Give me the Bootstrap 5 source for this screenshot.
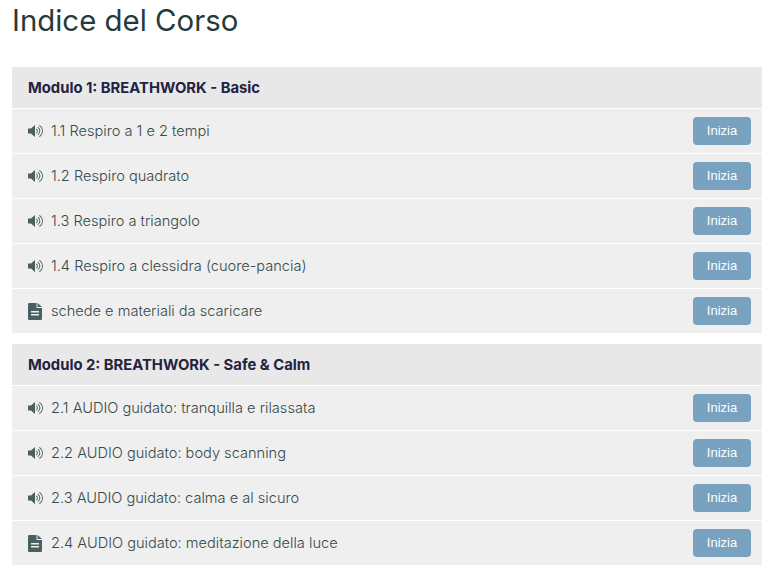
<!DOCTYPE html>
<html lang="it">
<head>
<meta charset="utf-8">
<title>Indice del Corso</title>
<link href="https://cdn.jsdelivr.net/npm/bootstrap@5.3.0/dist/css/bootstrap.min.css" rel="stylesheet">
<style>
html, body { height: 572px; overflow: hidden; }
body { font-family: Inter, Lato, sans-serif; background: #fff; padding: 0 16px 0 12px; }
.course-title { font-size: 29.4px; line-height: 42px; font-weight: 400; color: #263a3c; margin: 0 0 25px; }
.module-box { margin-bottom: 11px; }
.module-head { height: 41px; background: #e8e8e8; padding: 1px 0 0 16px; font-size: 14.8px; line-height: 22px; font-weight: 700; color: #232240; }
.lesson-row { height: 45px; background: #efefef; border-top: 1px solid #fff; padding: 0 11px 0 16px; font-size: 14.6px; line-height: 22px; font-weight: 300; color: #364a4b; }
.lesson-row svg { flex: none; fill: #4a5f5f; }
.icon-slot { width: 23px; flex: none; }
.start-btn { width: 58px; height: 28px; padding: 0 0 1px; font-family: "Liberation Sans", sans-serif; font-size: 13px; line-height: 27px; color: #fff; background: #78a2c0; border: 0; border-radius: 4px; }
</style>
</head>
<body>
<svg width="0" height="0" class="d-none">
  <symbol id="ic-audio" viewBox="0 0 16 14"><path d="M0 4.500h3L7 1v12L3 9.500H0z"/><path d="M8.500 4.500a3 3 0 0 1 0 5l-.5-.8a2 2 0 0 0 0-3.400zM10 2.800a5 5 0 0 1 0 8.400l-.5-.8a4 4 0 0 0 0-6.800zM11.500 1a7 7 0 0 1 0 12l-.5-.8a6 6 0 0 0 0-10.400z"/></symbol>
  <symbol id="ic-file" viewBox="0 0 15 17"><path fill-rule="evenodd" d="M1 0h7.500v5H14v11a1 1 0 0 1-1 1H1a1 1 0 0 1-1-1V1a1 1 0 0 1 1-1zM3 8v1.500h8V8zm0 3v1.500h8V11zM9.500 0 14 4H9.500z"/></symbol>
</svg>
<h1 class="course-title">Indice del Corso</h1>

<section class="module-box">
  <div class="module-head d-flex align-items-center">Modulo 1: BREATHWORK - Basic</div>
  <div class="lesson-row d-flex align-items-center justify-content-between">
    <span class="d-flex align-items-center"><span class="icon-slot d-flex"><svg width="16" height="14"><use href="#ic-audio"/></svg></span><span>1.1 Respiro a 1 e 2 tempi</span></span>
    <button type="button" class="btn start-btn">Inizia</button>
  </div>
  <div class="lesson-row d-flex align-items-center justify-content-between">
    <span class="d-flex align-items-center"><span class="icon-slot d-flex"><svg width="16" height="14"><use href="#ic-audio"/></svg></span><span>1.2 Respiro quadrato</span></span>
    <button type="button" class="btn start-btn">Inizia</button>
  </div>
  <div class="lesson-row d-flex align-items-center justify-content-between">
    <span class="d-flex align-items-center"><span class="icon-slot d-flex"><svg width="16" height="14"><use href="#ic-audio"/></svg></span><span>1.3 Respiro a triangolo</span></span>
    <button type="button" class="btn start-btn">Inizia</button>
  </div>
  <div class="lesson-row d-flex align-items-center justify-content-between">
    <span class="d-flex align-items-center"><span class="icon-slot d-flex"><svg width="16" height="14"><use href="#ic-audio"/></svg></span><span>1.4 Respiro a clessidra (cuore-pancia)</span></span>
    <button type="button" class="btn start-btn">Inizia</button>
  </div>
  <div class="lesson-row d-flex align-items-center justify-content-between">
    <span class="d-flex align-items-center"><span class="icon-slot d-flex"><svg width="15" height="17"><use href="#ic-file"/></svg></span><span>schede e materiali da scaricare</span></span>
    <button type="button" class="btn start-btn">Inizia</button>
  </div>
</section>

<section class="module-box">
  <div class="module-head d-flex align-items-center">Modulo 2: BREATHWORK - Safe &amp; Calm</div>
  <div class="lesson-row d-flex align-items-center justify-content-between">
    <span class="d-flex align-items-center"><span class="icon-slot d-flex"><svg width="16" height="14"><use href="#ic-audio"/></svg></span><span>2.1 AUDIO guidato: tranquilla e rilassata</span></span>
    <button type="button" class="btn start-btn">Inizia</button>
  </div>
  <div class="lesson-row d-flex align-items-center justify-content-between">
    <span class="d-flex align-items-center"><span class="icon-slot d-flex"><svg width="16" height="14"><use href="#ic-audio"/></svg></span><span>2.2 AUDIO guidato: body scanning</span></span>
    <button type="button" class="btn start-btn">Inizia</button>
  </div>
  <div class="lesson-row d-flex align-items-center justify-content-between">
    <span class="d-flex align-items-center"><span class="icon-slot d-flex"><svg width="16" height="14"><use href="#ic-audio"/></svg></span><span>2.3 AUDIO guidato: calma e al sicuro</span></span>
    <button type="button" class="btn start-btn">Inizia</button>
  </div>
  <div class="lesson-row d-flex align-items-center justify-content-between">
    <span class="d-flex align-items-center"><span class="icon-slot d-flex"><svg width="15" height="17"><use href="#ic-file"/></svg></span><span>2.4 AUDIO guidato: meditazione della luce</span></span>
    <button type="button" class="btn start-btn">Inizia</button>
  </div>
</section>
</body>
</html>
